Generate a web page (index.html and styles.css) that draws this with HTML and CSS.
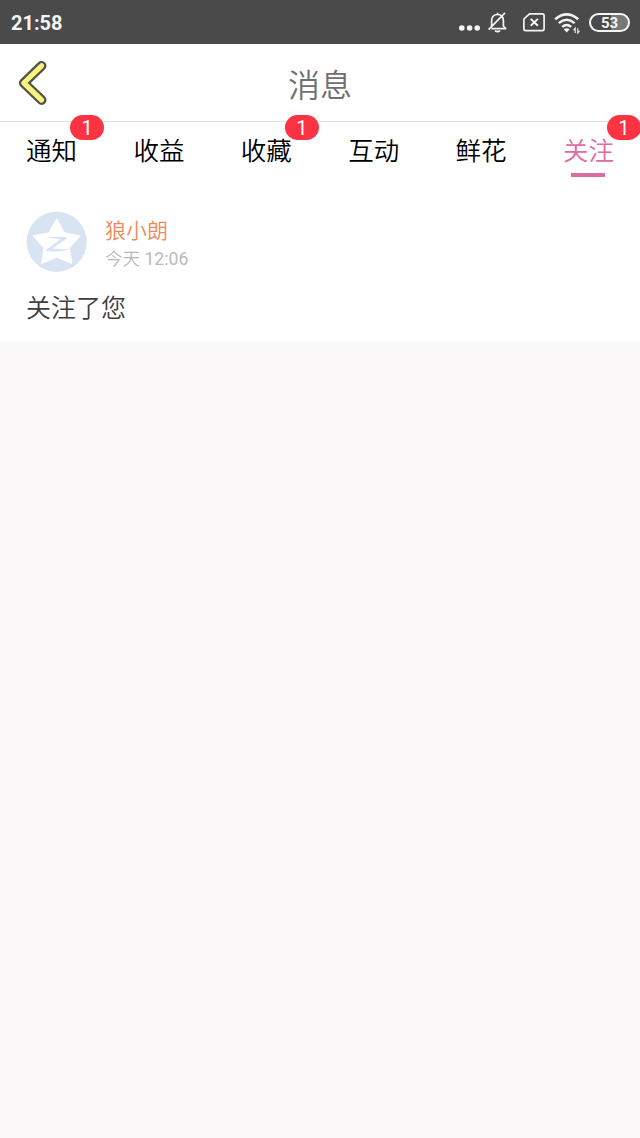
FILE: index.html
```html
<!DOCTYPE html>
<html lang="zh-CN">
<head>
  <meta charset="UTF-8" />
  <meta name="viewport" content="width=device-width, initial-scale=1.0" />
  <title>消息</title>
  <link rel="stylesheet" href="styles.css">
</head>
<body>
  <div class="statusbar">
    <span class="clock">21:58</span>
    <div class="status-icons">
      <svg class="dots" width="22" height="22" viewBox="0 0 22 22">
        <circle cx="3.8" cy="17" r="2.8" />
        <circle cx="11.6" cy="17" r="2.8" />
        <circle cx="19.2" cy="17" r="2.8" />
      </svg>
      <svg class="line bell" width="20" height="22" viewBox="0 0 20 22">
        <path d="M4.6 16V10.2C4.6 6 6.5 3.5 10.5 3.5S16.4 6 16.4 10V15L18.7 17.6H4.5M10.5 3.5V1.8M1.6 18.6L18 1.8" />
        <path d="M8 19.7Q10.5 21.7 13 19.7" />
      </svg>
      <svg class="line sim" width="22" height="22" viewBox="0 0 22 22">
        <path d="M6.5 2.8H19.3Q21.1 2.8 21.1 4.6V17.8Q21.1 19.6 19.3 19.6H2.7Q0.9 19.6 0.9 17.8V8Z" />
        <path class="bold" d="M7.7 7.9L14.9 14.8M14.9 7.9L7.7 14.8" />
      </svg>
      <svg class="wifi" width="26" height="22" viewBox="0 0 26 22">
        <path d="M1.2 7.2Q12.7 -2.4 24.2 7.2M4.8 11.1Q12.7 4.4 20.6 11.1M8.2 14.9Q12.7 11 17.2 14.9" />
        <path class="fill" d="M9.8 17.3Q12.7 15.2 15.6 17.3L12.7 20.6Z" />
        <path class="arrows" d="M21.2 21V16.2L19.6 18.3M23.8 16.2V21L25.4 18.9" />
      </svg>
      <span class="battery">53</span>
    </div>
  </div>

  <div class="header">
    <svg class="back" width="32" height="46" viewBox="0 0 32 46">
      <path class="outer" d="M24.6 5.8L6.8 23L24.6 40" />
      <path class="inner" d="M24.6 5.8L6.8 23L24.6 40" />
    </svg>
    <h1>消息</h1>
  </div>

  <div class="tabs">
    <div class="tab">通知<span class="badge">1</span></div>
    <div class="tab">收益</div>
    <div class="tab">收藏<span class="badge">1</span></div>
    <div class="tab">互动</div>
    <div class="tab">鲜花</div>
    <div class="tab active">关注<span class="badge">1</span></div>
  </div>

  <div class="message">
    <div class="user">
      <svg class="avatar" width="61" height="61" viewBox="0 0 61 61">
        <circle class="disc" cx="30.7" cy="30.8" r="30.1" />
        <path class="star" d="M30.7 7.8L38.6 21.8L54.3 24.9L43.5 36.8L45.8 52.6L30.7 46.2L15.6 52.6L17.9 36.8L7 24.9L22.8 21.8Z" />
        <path class="zed" d="M20.5 27Q31 25 42.3 26.4L26.5 37.6Q36 38.8 45.5 37.4Q32 42.3 19 39.4L34.3 28.2Q27 27 20.5 27Z" />
      </svg>
      <div class="info">
        <div class="name">狼小朗</div>
        <div class="time">今天 <span class="hour">12:06</span></div>
      </div>
    </div>
    <div class="text">关注了您</div>
  </div>
</body>
</html>
```
FILE: styles.css
```css
html, body {
  margin: 0;
  padding: 0;
}

body {
  min-height: 100vh;
  background: #faf8f9;
  overflow: hidden;
  font-family: Roboto, "Noto Sans CJK SC", sans-serif;
}

.statusbar {
  display: flex;
  align-items: center;
  justify-content: space-between;
  box-sizing: border-box;
  height: 44px;
  padding: 0 10px 0 11px;
  background: #4a4a4a;
  color: #f4f4f4;
}

.clock {
  font-size: 20px;
  font-weight: 700;
  padding-top: 2px;
}

.status-icons {
  display: flex;
  align-items: center;
}

.status-icons svg {
  fill: #f4f4f4;
}

.status-icons .line {
  fill: none;
  stroke: #f4f4f4;
  stroke-width: 1.7;
  stroke-linejoin: round;
}

.status-icons .bold {
  stroke-width: 2;
}

.bell {
  margin-left: 7px;
}

.sim {
  margin-left: 16px;
}

.wifi {
  margin: 2px 0 0 9px;
}

.wifi path {
  fill: none;
  stroke: #f4f4f4;
  stroke-width: 2.5;
}

.wifi .fill {
  fill: #f4f4f4;
  stroke: none;
}

.wifi .arrows {
  stroke-width: 1.1;
}

.battery {
  box-sizing: border-box;
  width: 41px;
  height: 19px;
  margin-left: 9px;
  border: 2px solid #f4f4f4;
  border-radius: 10px;
  background: linear-gradient(90deg, #4a4a4a 53%, #777 53%);
  font-size: 15px;
  font-weight: 700;
  line-height: 16px;
  text-align: center;
}

.header {
  display: grid;
  grid-template-columns: 60px 1fr 60px;
  align-items: center;
  box-sizing: border-box;
  height: 78px;
  background: #fff;
  border-bottom: 1px solid #e2e2e2;
}

.back {
  margin-left: 17px;
  fill: none;
  stroke-linecap: round;
  stroke-linejoin: round;
}

.back .outer {
  stroke: #55543f;
  stroke-width: 9.8;
}

.back .inner {
  stroke: #f8f284;
  stroke-width: 5.2;
}

.header h1 {
  margin: 7px 0 0;
  color: #707070;
  font-size: 32px;
  font-weight: 350;
  line-height: 44px;
  text-align: center;
}

.tabs {
  display: flex;
  justify-content: space-between;
  box-sizing: border-box;
  height: 70px;
  padding: 10px 26px 0;
  background: #fff;
}

.tab {
  position: relative;
  color: #000;
  font-size: 25.5px;
  font-weight: 350;
  line-height: 38px;
}

.tab.active {
  color: #dd6ca4;
}

.tab.active::after {
  content: "";
  display: block;
  width: 34px;
  height: 4px;
  margin: 3px auto 0;
  background: #dd6ca4;
}

.badge {
  position: absolute;
  top: -17px;
  left: 44px;
  width: 34px;
  height: 25px;
  border-radius: 13px;
  background: #fb3343;
  color: #fff;
  font-size: 20px;
  font-weight: 400;
  line-height: 26px;
  text-align: center;
}

.message {
  box-sizing: border-box;
  height: 149px;
  padding: 19px 26px 0;
  background: #fff;
}

.user {
  display: flex;
}

.avatar .disc {
  fill: #d8e4f2;
}

.avatar .star {
  fill: #fff;
  stroke: #fff;
  stroke-width: 1;
  stroke-linejoin: round;
}

.avatar .zed {
  fill: #d8e4f2;
}

.info {
  margin-left: 18px;
}

.name {
  margin-top: 5px;
  color: #ec8a5a;
  font-size: 21px;
  font-weight: 350;
  line-height: 30px;
}

.time {
  color: #bababa;
  font-size: 17.6px;
  font-weight: 350;
  line-height: 27px;
}

.hour {
  font-weight: 400;
}

.text {
  margin-top: 18px;
  color: #404040;
  font-size: 25px;
  font-weight: 350;
  line-height: 36px;
}
```
